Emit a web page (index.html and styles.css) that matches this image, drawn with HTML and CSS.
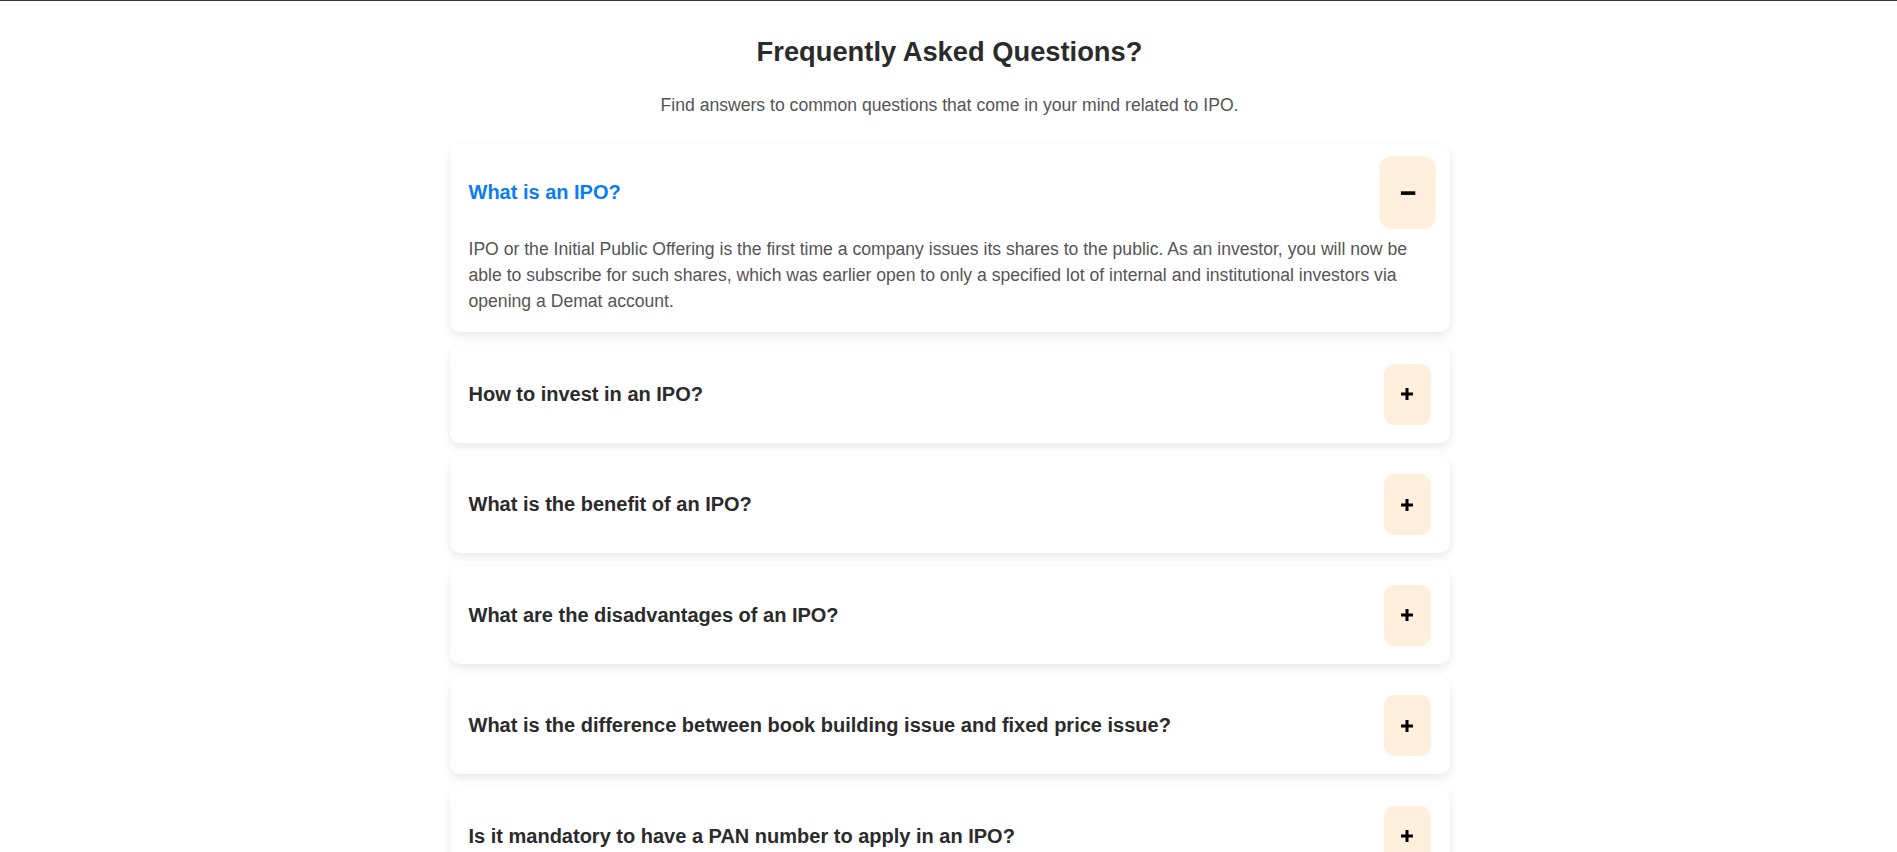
FILE: index.html
```html
<!DOCTYPE html>
<html lang="en">
<head>
<meta charset="utf-8">
<title>FAQ</title>
<link rel="stylesheet" href="styles.css">
</head>
<body>
<div class="topline"></div>
<main class="faq">
  <h2 class="faq-title">Frequently Asked Questions?</h2>
  <p class="faq-sub">Find answers to common questions that come in your mind related to IPO.</p>
  <div class="faq-list">
    <div class="faq-item open">
      <div class="faq-head">
        <span class="faq-q">What is an IPO?</span>
        <span class="faq-btn"><svg width="14" height="14" viewBox="0 0 14 14"><rect x="1" y="5.5" width="12" height="3" fill="#000"/></svg></span>
      </div>
      <div class="faq-a">IPO or the Initial Public Offering is the first time a company issues its shares to the public. As an investor, you will now be able to subscribe for such shares, which was earlier open to only a specified lot of internal and institutional investors via opening a Demat account.</div>
    </div>
    <div class="faq-item">
      <div class="faq-head">
        <span class="faq-q">How to invest in an IPO?</span>
        <span class="faq-btn"><svg width="14" height="14" viewBox="0 0 14 14"><rect x="1" y="5.5" width="12" height="3" fill="#000"/><rect x="5.5" y="1" width="3" height="12" fill="#000"/></svg></span>
      </div>
    </div>
    <div class="faq-item">
      <div class="faq-head">
        <span class="faq-q">What is the benefit of an IPO?</span>
        <span class="faq-btn"><svg width="14" height="14" viewBox="0 0 14 14"><rect x="1" y="5.5" width="12" height="3" fill="#000"/><rect x="5.5" y="1" width="3" height="12" fill="#000"/></svg></span>
      </div>
    </div>
    <div class="faq-item">
      <div class="faq-head">
        <span class="faq-q">What are the disadvantages of an IPO?</span>
        <span class="faq-btn"><svg width="14" height="14" viewBox="0 0 14 14"><rect x="1" y="5.5" width="12" height="3" fill="#000"/><rect x="5.5" y="1" width="3" height="12" fill="#000"/></svg></span>
      </div>
    </div>
    <div class="faq-item">
      <div class="faq-head">
        <span class="faq-q">What is the difference between book building issue and fixed price issue?</span>
        <span class="faq-btn"><svg width="14" height="14" viewBox="0 0 14 14"><rect x="1" y="5.5" width="12" height="3" fill="#000"/><rect x="5.5" y="1" width="3" height="12" fill="#000"/></svg></span>
      </div>
    </div>
    <div class="faq-item">
      <div class="faq-head">
        <span class="faq-q">Is it mandatory to have a PAN number to apply in an IPO?</span>
        <span class="faq-btn"><svg width="14" height="14" viewBox="0 0 14 14"><rect x="1" y="5.5" width="12" height="3" fill="#000"/><rect x="5.5" y="1" width="3" height="12" fill="#000"/></svg></span>
      </div>
    </div>
    <div class="faq-item">
      <div class="faq-head">
        <span class="faq-q">How do I know if I got an IPO allotment?</span>
        <span class="faq-btn"><svg width="14" height="14" viewBox="0 0 14 14"><rect x="1" y="5.5" width="12" height="3" fill="#000"/><rect x="5.5" y="1" width="3" height="12" fill="#000"/></svg></span>
      </div>
    </div>
  </div>
</main>
</body>
</html>
```
FILE: styles.css
```css
* { box-sizing: border-box; }
html, body { margin: 0; padding: 0; background: #fff; }
body {
  font-family: "Liberation Sans", Arial, sans-serif;
  color: #333;
}
.topline {
  height: 1px;
  background: #333;
}
.faq {
  max-width: 1000px;
  margin: 0 auto;
  padding: 35px 0 40px;
  position: relative;
  left: 1px;
}
.faq-title {
  margin: 0;
  text-align: center;
  font-size: 27.3px;
  font-weight: 700;
  color: #2b2b2b;
  line-height: 32px;
}
.faq-sub {
  margin: 27px 0 0;
  text-align: center;
  font-size: 17.6px;
  line-height: 20px;
  color: #555;
}
.faq-list {
  margin-top: 29px;
  display: flex;
  flex-direction: column;
  gap: 13.6px;
}
.faq-item {
  background: #fff;
  border-radius: 10px;
  box-shadow: 0 4px 10px rgba(0, 0, 0, 0.09);
}
.faq-head {
  display: flex;
  align-items: center;
  justify-content: space-between;
  padding: 18px 19px 18px 19px;
}
.faq-q {
  font-size: 20px;
  font-weight: 700;
  color: #2b2b2b;
}
.faq-item.open .faq-q { color: #0a7cf5; }
.faq-btn {
  width: 47px;
  height: 61px;
  border-radius: 11px;
  background: #ffefdc;
  display: flex;
  align-items: center;
  justify-content: center;
  flex: none;
}
.faq-item.open .faq-btn { transform: scale(1.2); }
.faq-a {
  margin-top: -5px;
  padding: 0 19px 18px;
  font-size: 17.6px;
  line-height: 26px;
  color: #555;
}
```
